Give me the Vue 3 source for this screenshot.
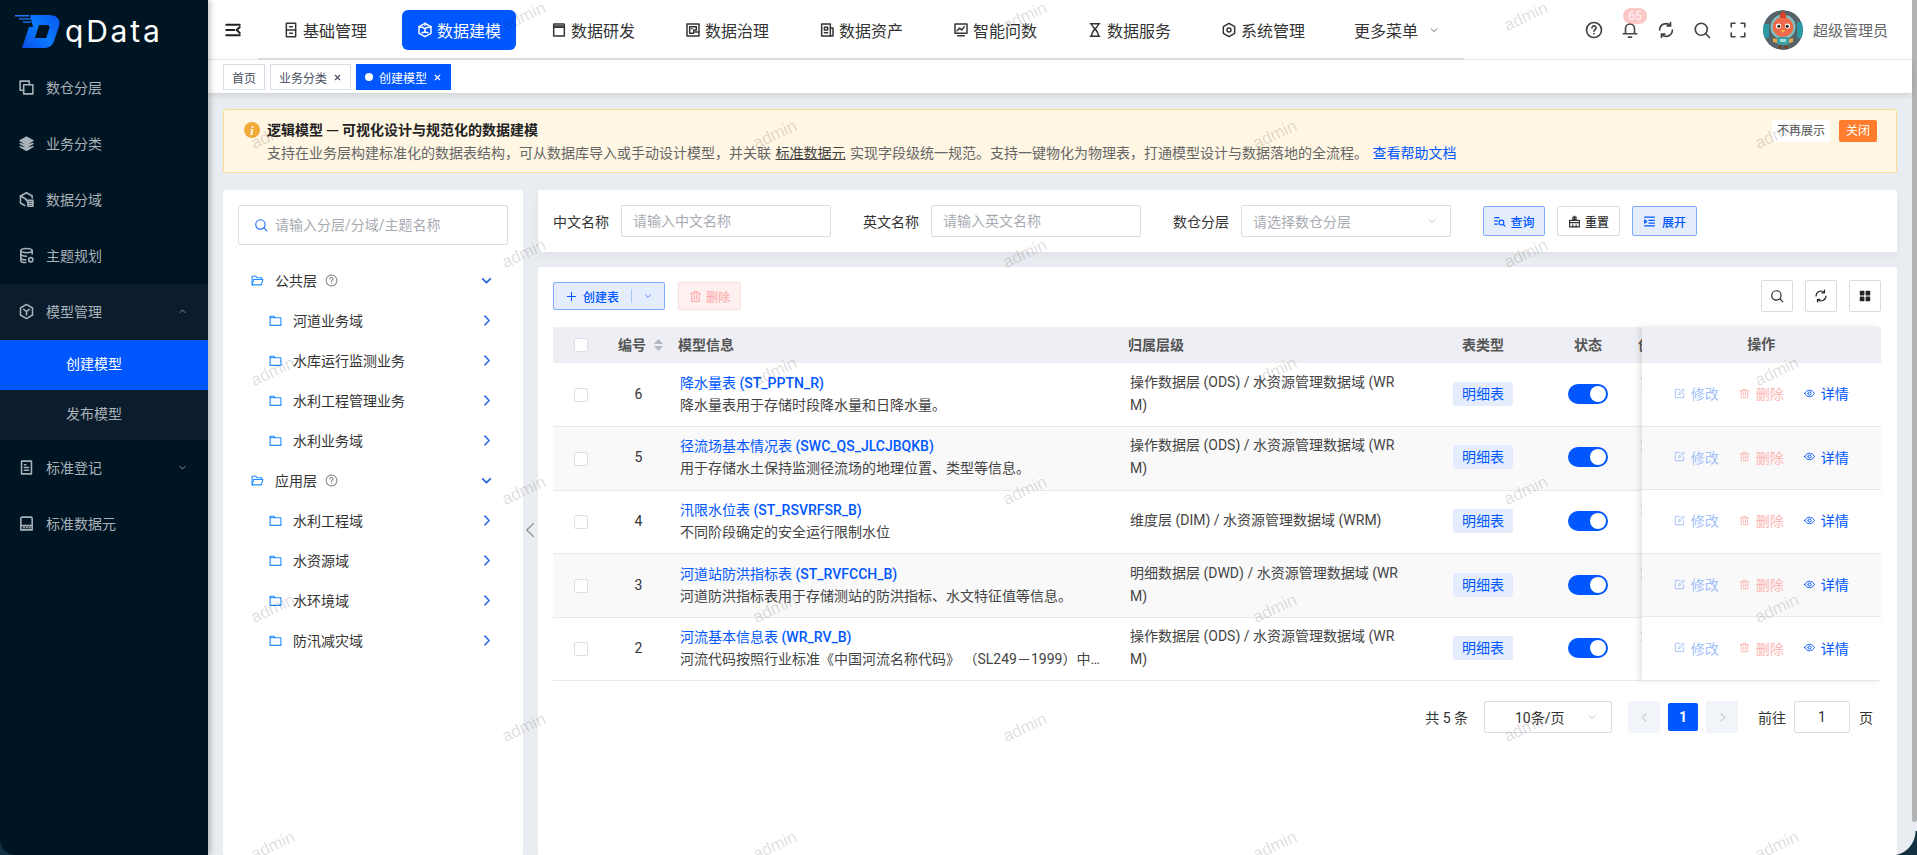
<template>
  <div class="layout">
    <aside class="sidebar">
      <div class="logo">
        <svg class="logo-mark" viewBox="0 0 45 33">
          <defs>
            <linearGradient id="logoBlue" x1="0" y1="1" x2="1" y2="0.2">
              <stop offset="0" stop-color="#0a4fe8" />
              <stop offset="0.55" stop-color="#0a7bff" />
              <stop offset="1" stop-color="#0a5cf0" />
            </linearGradient>
          </defs>
          <path d="M0 0h14v1.4H0zM4 3.2h12v1.4H4zM8 6.4h8v1.4H8z" fill="#1f7bff" />
          <path d="M15 0H34C42 0 46 5 44 11L39 26C37.5 30.5 34 33 29 33H7L14 12H18L15 0Z" fill="url(#logoBlue)" />
          <path d="M24 10H32C34 10 35 11.5 34.3 13.5L31.2 23H19.8Z" fill="#001524" />
        </svg>
        <span class="logo-text">qData</span>
      </div>
      <nav class="side-menu">
        <template v-for="item in sideMenu" :key="item.label">
          <div class="side-item" :class="{ 'side-open': item.children }">
            <Icon :name="item.icon" class="side-icon" :class="{ solid: item.icon === 'stack' }" />
            <span>{{ item.label }}</span>
            <Icon v-if="item.arrow" :name="item.arrow" class="side-arrow" />
          </div>
          <div
            v-for="child in item.children"
            :key="child.label"
            class="side-sub"
            :class="{ active: child.active }"
          >
            {{ child.label }}
          </div>
        </template>
      </nav>
    </aside>

    <div class="main">
      <header class="topbar">
        <Icon name="fold" class="fold-icon" />
        <div class="top-menu">
          <div
            v-for="nav in topMenu"
            :key="nav.label"
            class="top-item"
            :class="{ active: nav.active }"
          >
            <Icon :name="nav.icon" class="top-icon" />
            <span>{{ nav.label }}</span>
          </div>
          <div class="top-item top-more">
            <span>更多菜单</span>
            <Icon name="down" class="more-arrow" />
          </div>
        </div>
        <div class="top-right">
          <Icon name="help" class="tool-icon" />
          <div class="bell">
            <Icon name="bell" class="tool-icon" />
            <span class="badge">65</span>
          </div>
          <Icon name="refresh" class="tool-icon" />
          <Icon name="search" class="tool-icon" />
          <Icon name="full" class="tool-icon" />
          <svg class="avatar" viewBox="0 0 40 40">
            <circle cx="20" cy="20" r="20" fill="#56646a" />
            <path d="M0 14h6v14H0zM34 12h6v16h-6z" fill="#2b9aa5" />
            <circle cx="20" cy="17" r="12.5" fill="#7ec4c6" />
            <ellipse cx="20" cy="17" rx="10.5" ry="10" fill="#ee6a4c" />
            <path d="M17 8c-1-3 1-5 3-7 2 2 4 4 3 7z" fill="#d9432c" />
            <circle cx="15.5" cy="16" r="2.6" fill="#fff" />
            <circle cx="24.5" cy="16" r="2.6" fill="#fff" />
            <circle cx="15.8" cy="16.2" r="1.5" fill="#222" />
            <circle cx="24.2" cy="16.2" r="1.5" fill="#222" />
            <path d="M17.5 20h5l-2.5 3z" fill="#f4b63f" />
            <rect x="14" y="27" width="12" height="8" rx="2" fill="#3f9da6" />
            <rect x="17" y="29" width="6" height="3" fill="#9fe0e0" />
            <path d="M10 28l4 1v4l-4-1zM30 28l-4 1v4l4-1z" fill="#e5a94b" />
            <path d="M15 35h4v4h-4zM21 35h4v4h-4z" fill="#6d4a33" />
          </svg>
          <span class="username">超级管理员</span>
        </div>
      </header>

      <div class="tags">
        <div class="tag-item">首页</div>
        <div class="tag-item">业务分类<Icon name="close" class="tag-close" /></div>
        <div class="tag-item active">
          <i class="tag-dot"></i>创建模型<Icon name="close" class="tag-close" />
        </div>
      </div>

      <div class="content">
        <div class="notice">
          <svg class="notice-icon" viewBox="0 0 16 16">
            <circle cx="8" cy="8" r="8" fill="#f0ab3c" />
            <text x="8" y="12.5" text-anchor="middle" class="notice-i">i</text>
          </svg>
          <div class="notice-body">
            <div class="notice-title">逻辑模型 — 可视化设计与规范化的数据建模</div>
            <div class="notice-text">
              支持在业务层构建标准化的数据表结构，可从数据库导入或手动设计模型，并关联 <u>标准数据元</u> 实现字段级统一规范。支持一键物化为物理表，打通模型设计与数据落地的全流程。 <a class="notice-link">查看帮助文档</a>
            </div>
          </div>
          <div class="notice-actions">
            <span class="btn-mute">不再展示</span>
            <span class="btn-close">关闭</span>
          </div>
        </div>

        <div class="workspace">
          <section class="tree-panel">
            <div class="tree-search">
              <Icon name="search" class="tree-search-icon" />
              <input placeholder="请输入分层/分域/主题名称" />
            </div>
            <div class="tree">
              <template v-for="group in tree" :key="group.label">
                <div class="tree-row">
                  <Icon name="folderOpen" class="tree-folder" />
                  <span>{{ group.label }}</span>
                  <Icon name="help" class="tree-help" />
                  <Icon name="down" class="tree-down" />
                </div>
                <div v-for="leaf in group.children" :key="leaf" class="tree-row tree-leaf">
                  <Icon name="folder" class="tree-folder" />
                  <span>{{ leaf }}</span>
                  <Icon name="right" class="tree-right" />
                </div>
              </template>
            </div>
          </section>

          <div class="splitter"><Icon name="left" class="splitter-icon" /></div>

          <div class="right-col">
            <section class="filter-panel">
              <div class="form-item">
                <label>中文名称</label>
                <input placeholder="请输入中文名称" />
              </div>
              <div class="form-item">
                <label>英文名称</label>
                <input placeholder="请输入英文名称" />
              </div>
              <div class="form-item">
                <label>数仓分层</label>
                <div class="select">
                  <span>请选择数仓分层</span>
                  <Icon name="down" class="select-arrow" />
                </div>
              </div>
              <div class="form-btns">
                <button class="btn btn-plain btn-query"><Icon name="listSearch" class="btn-icon" />查询</button>
                <button class="btn btn-reset"><Icon name="brush" class="btn-icon" />重置</button>
                <button class="btn btn-plain btn-expand"><Icon name="indent" class="btn-icon" />展开</button>
              </div>
            </section>

            <section class="table-panel">
              <div class="toolbar">
                <button class="btn btn-plain btn-create">
                  <Icon name="plus" class="btn-icon" />创建表<i class="btn-split"></i><Icon name="down" class="btn-down" />
                </button>
                <button class="btn btn-del"><Icon name="trash" class="btn-icon" />删除</button>
                <div class="toolbar-right">
                  <button class="square-btn"><Icon name="search" class="square-icon" /></button>
                  <button class="square-btn"><Icon name="refresh" class="square-icon" /></button>
                  <button class="square-btn"><Icon name="grid" class="square-icon solid" /></button>
                </div>
              </div>

              <div class="table-wrap">
                <div class="table-scroll">
                  <table class="data-table">
                    <colgroup>
                      <col style="width: 56px" />
                      <col style="width: 63px" />
                      <col style="width: 448px" />
                      <col style="width: 308px" />
                      <col style="width: 110px" />
                      <col style="width: 100px" />
                      <col style="width: 180px" />
                    </colgroup>
                    <thead>
                      <tr>
                        <th class="center"><i class="checkbox"></i></th>
                        <th class="id-head">
                          编号<svg class="sort" viewBox="0 0 9 12"><path d="M4.5 0 9 5H0zM4.5 12 0 7h9z" /></svg>
                        </th>
                        <th>模型信息</th>
                        <th class="level-head">归属层级</th>
                        <th class="center">表类型</th>
                        <th class="center">状态</th>
                        <th class="time-head">创建时间</th>
                      </tr>
                    </thead>
                    <tbody>
                      <tr v-for="row in rows" :key="row.id">
                        <td class="center"><i class="checkbox"></i></td>
                        <td class="id-cell">{{ row.id }}</td>
                        <td class="info-cell">
                          <div class="model-name">{{ row.name }} <span class="model-code">({{ row.code }})</span></div>
                          <div class="model-desc">{{ row.desc }}</div>
                        </td>
                        <td class="level-cell"><div>{{ row.level }}</div></td>
                        <td class="center"><span class="type-tag">明细表</span></td>
                        <td class="center"><span class="switch"></span></td>
                        <td class="time-cell">2025-08-26<br />10:21:33</td>
                      </tr>
                    </tbody>
                  </table>
                </div>
                <div class="table-fixed">
                  <div class="fixed-head">操作</div>
                  <div v-for="row in rows" :key="row.id" class="fixed-row">
                    <span class="action edit"><Icon name="edit" class="action-icon" />修改</span>
                    <span class="action del"><Icon name="trash" class="action-icon" />删除</span>
                    <span class="action view"><Icon name="eye" class="action-icon" />详情</span>
                  </div>
                </div>
              </div>

              <div class="pager">
                <span class="pager-total">共 5 条</span>
                <div class="pager-size">
                  <span>10条/页</span>
                  <Icon name="down" class="select-arrow" />
                </div>
                <span class="pager-btn"><Icon name="left" class="pager-arrow" /></span>
                <span class="pager-num">1</span>
                <span class="pager-btn"><Icon name="right" class="pager-arrow" /></span>
                <span class="pager-goto">前往</span>
                <input class="pager-input" value="1" />
                <span class="pager-unit">页</span>
              </div>
            </section>
          </div>
        </div>
      </div>
    </div>

    <div class="scroll-track"><div class="scroll-thumb"></div></div>

    <!-- watermark and window corners lie over the page -->
    <div class="watermarks">
      <span
        v-for="mark in watermarks"
        :key="mark.x + '-' + mark.y"
        class="mark"
        :style="{ left: mark.x + 'px', top: mark.y + 'px' }"
      >admin</span>
    </div>
    <div class="corner corner-left"></div>
    <div class="corner corner-right"></div>
  </div>
</template>

<script setup>
import { h } from 'vue'

const icons = {
  fold: ['M3 5h18', 'M3 19h18', 'M3 12h11', 'M21 8l-4 4 4 4'],
  layers: ['M8 8h13v13H8z', 'M16 8V3H3v13h5'],
  stack: ['M12 3 3 8l9 5 9-5z', 'M3 12l9 5 9-5', 'M3 16.5l9 5 9-5'],
  domain: ['M12 2.5 3.5 7v10l6 3.5', 'M12 2.5 20 7v3', 'M3.5 7 12 12v2', 'M14 13h7v8.5h-7z', 'M14 16h7', 'M14 18.8h7'],
  theme: [
    'M4 5c0-1.7 3.5-3 8-3s8 1.3 8 3-3.5 3-8 3-8-1.3-8-3z',
    'M4 5v14c0 1.7 3 3 7 3',
    'M20 5v5',
    'M4 10c0 1.7 3.5 3 8 3',
    'M4 15c0 1.7 3 3 7 3',
    'M15 18a3 3 0 1 0 6 0 3 3 0 1 0-6 0'
  ],
  model: ['M12 2 20.5 7v10L12 22 3.5 17V7z', 'M8 9l4 3 4-3', 'M12 12v5'],
  doc: ['M5 3h14v18H5z', 'M9 8h2', 'M9 12h6', 'M9 16h6'],
  standard: ['M6 3h12a2 2 0 0 1 2 2v16H4V5a2 2 0 0 1 2-2z', 'M4 15h16', 'M8 18h1', 'M12 18h1', 'M16 18h1'],
  base: ['M5 2h14v20H5z', 'M5 12h14', 'M10 7h4', 'M10 17h4'],
  cube: ['M12 2 21 7v10l-9 5-9-5V7z', 'M7.5 7.5 12 10l4.5-2.5', 'M12 10v5', 'M7.5 16l4.5-1 4.5 1', 'M12 2v3', 'M3 7l3 1.5', 'M21 7l-3 1.5'],
  dev: ['M5 3h14a1 1 0 0 1 1 1v17H4V4a1 1 0 0 1 1-1z', 'M4 6h16', 'M4 8h16'],
  govern: ['M3 3h18v18H3z', 'M7 7h10v5h-4v5H7z', 'M15 15h6', 'M10 10h.5'],
  asset: ['M4 3h13v18H4z', 'M17 9h4v12h-4', 'M8 8h5v4H8z', 'M8 16h5'],
  monitor: ['M3 3h18v14H3z', 'M6 13l4-4 3 3 4-5', 'M7 20.5h10'],
  service: ['M5 2.5h14', 'M5 21.5h14', 'M7 3c0 6 10 8 10 18', 'M17 3c0 6-10 8-10 18'],
  system: ['M12 2 20.5 7v10L12 22 3.5 17V7z', 'M9 12a3 3 0 1 0 6 0 3 3 0 1 0-6 0'],
  down: ['M5 9l7 7 7-7'],
  up: ['M5 15l7-7 7 7'],
  left: ['M15 4l-8 8 8 8'],
  right: ['M9 4l8 8-8 8'],
  help: ['M2 12a10 10 0 1 0 20 0 10 10 0 1 0-20 0', 'M9.3 9.2a2.7 2.7 0 1 1 4 2.4c-.8.5-1.3 1-1.3 2', 'M12 16.8v.4'],
  bell: ['M18 16V10a6 6 0 0 0-12 0v6', 'M3 17h18', 'M10 21.5h4'],
  refresh: ['M20.5 12a8.5 8.5 0 0 1-14.5 6', 'M3.5 12A8.5 8.5 0 0 1 18 6', 'M18 2v4.5h-4.5', 'M6 22v-4.5h4.5'],
  search: ['M3 11a8 8 0 1 0 16 0 8 8 0 1 0-16 0', 'M17 17l5 5'],
  full: ['M3 8V3h5', 'M16 3h5v5', 'M21 16v5h-5', 'M8 21H3v-5'],
  close: ['M6 6l12 12', 'M18 6 6 18'],
  folder: ['M2 4h7l2 3h11v14H2z', 'M2 7h9'],
  folderOpen: ['M2 20V4h7l2 3h9v3', 'M2 20l3-10h17l-3 10z'],
  listSearch: ['M3 5h8', 'M3 11h5', 'M3 17h5', 'M11 14a4.5 4.5 0 1 0 9 0 4.5 4.5 0 1 0-9 0', 'M19 17.5l3 3'],
  brush: ['M12 2v6', 'M9 4h6v4H9z', 'M3 10h18v12H3z', 'M3 14h18', 'M9 18v4', 'M15 18v4'],
  indent: ['M3 4h18', 'M3 20h18', 'M11 10h10', 'M11 15h10', 'M3 9l4 3-4 3z'],
  plus: ['M12 3v18', 'M3 12h18'],
  trash: ['M3 6h18', 'M9 6V3h6v3', 'M5 6v15h14V6', 'M10 10v7', 'M14 10v7'],
  edit: ['M12 3H3v18h18v-9', 'M10 14l1-4 9-8 3 3-9 8z'],
  eye: ['M1.5 12C4 7 8 5 12 5s8 2 10.5 7C20 17 16 19 12 19s-8-2-10.5-7z', 'M8.5 12a3.5 3.5 0 1 0 7 0 3.5 3.5 0 1 0-7 0'],
  grid: ['M4 4h6v6H4z', 'M14 4h6v6h-6z', 'M4 14h6v6H4z', 'M14 14h6v6h-6z']
}

// small stroke icon, path data comes from the map above
const Icon = (props) =>
  h(
    'svg',
    {
      viewBox: '0 0 24 24',
      fill: 'none',
      stroke: 'currentColor',
      'stroke-width': 2,
      'stroke-linecap': 'round',
      'stroke-linejoin': 'round'
    },
    icons[props.name].map((d) => h('path', { d }))
  )
Icon.props = ['name']

const sideMenu = [
  { label: '数仓分层', icon: 'layers' },
  { label: '业务分类', icon: 'stack' },
  { label: '数据分域', icon: 'domain' },
  { label: '主题规划', icon: 'theme' },
  {
    label: '模型管理',
    icon: 'model',
    arrow: 'up',
    children: [{ label: '创建模型', active: true }, { label: '发布模型' }]
  },
  { label: '标准登记', icon: 'doc', arrow: 'down' },
  { label: '标准数据元', icon: 'standard' }
]

const topMenu = [
  { label: '基础管理', icon: 'base' },
  { label: '数据建模', icon: 'cube', active: true },
  { label: '数据研发', icon: 'dev' },
  { label: '数据治理', icon: 'govern' },
  { label: '数据资产', icon: 'asset' },
  { label: '智能问数', icon: 'monitor' },
  { label: '数据服务', icon: 'service' },
  { label: '系统管理', icon: 'system' }
]

const tree = [
  { label: '公共层', children: ['河道业务域', '水库运行监测业务', '水利工程管理业务', '水利业务域'] },
  { label: '应用层', children: ['水利工程域', '水资源域', '水环境域', '防汛减灾域'] }
]

const rows = [
  {
    id: 6,
    name: '降水量表',
    code: 'ST_PPTN_R',
    desc: '降水量表用于存储时段降水量和日降水量。',
    level: '操作数据层 (ODS) / 水资源管理数据域 (WRM)'
  },
  {
    id: 5,
    name: '径流场基本情况表',
    code: 'SWC_QS_JLCJBQKB',
    desc: '用于存储水土保持监测径流场的地理位置、类型等信息。',
    level: '操作数据层 (ODS) / 水资源管理数据域 (WRM)'
  },
  {
    id: 4,
    name: '汛限水位表',
    code: 'ST_RSVRFSR_B',
    desc: '不同阶段确定的安全运行限制水位',
    level: '维度层 (DIM) / 水资源管理数据域 (WRM)'
  },
  {
    id: 3,
    name: '河道站防洪指标表',
    code: 'ST_RVFCCH_B',
    desc: '河道防洪指标表用于存储测站的防洪指标、水文特征值等信息。',
    level: '明细数据层 (DWD) / 水资源管理数据域 (WRM)'
  },
  {
    id: 2,
    name: '河流基本信息表',
    code: 'WR_RV_B',
    desc: '河流代码按照行业标准《中国河流名称代码》 （SL249－1999）中的规定进行编码和填写。',
    level: '操作数据层 (ODS) / 水资源管理数据域 (WRM)'
  }
]

const watermarks = []
;[273, 524, 775, 1025, 1275, 1526, 1777].forEach((x, i) => {
  const first = i % 2 === 0 ? 135 : 17
  for (let n = 0; n < 4; n++) {
    watermarks.push({ x, y: first + n * 237 })
  }
})
</script>

<style>
html,
body {
  margin: 0;
  height: 100%;
  overflow: hidden;
}
</style>

<style scoped>
.layout {
  position: relative;
  display: flex;
  width: 100%;
  height: 100vh;
  overflow: hidden;
  background: #e9edf1;
  color: #333;
  font-family: Roboto, "Noto Sans CJK SC", sans-serif;
  font-size: 14px;
}

svg {
  display: block;
  flex-shrink: 0;
}

.solid {
  fill: currentColor;
}

input {
  font-family: inherit;
  font-size: 14px;
  color: #333;
  outline: none;
  box-sizing: border-box;
}

input::placeholder {
  color: #a8abb2;
}

button {
  font-family: inherit;
  cursor: pointer;
}

/* sidebar */
.sidebar {
  flex: 0 0 208px;
  position: relative;
  z-index: 3;
  background: #001524;
  color: #a9b2b9;
  box-shadow: 2px 0 6px rgba(0, 0, 0, 0.25);
}

.logo {
  display: flex;
  align-items: center;
  height: 60px;
  padding: 0 0 0 15px;
  box-sizing: border-box;
}

.logo-mark {
  width: 45px;
  height: 33px;
  margin-top: 3px;
}

.logo-text {
  margin-left: 5px;
  margin-top: 1px;
  color: #fff;
  font-family: Inter, sans-serif;
  font-size: 30px;
  letter-spacing: 2.8px;
}

.side-item {
  display: flex;
  align-items: center;
  height: 56px;
  padding: 0 0 2px 18px;
  box-sizing: border-box;
  position: relative;
}

.side-icon {
  width: 17px;
  height: 17px;
  margin-right: 11px;
  stroke-width: 2.2;
}

.side-arrow {
  position: absolute;
  left: 178px;
  width: 9px;
  height: 9px;
}

.side-open {
  background: #0b1c2c;
}

.side-sub {
  height: 50px;
  line-height: 48px;
  padding-left: 66px;
  background: #0b1c2c;
}

.side-sub.active {
  background: #0057ff;
  color: #fff;
}

/* top bar */
.main {
  flex: 1;
  min-width: 0;
  display: flex;
  flex-direction: column;
}

.topbar {
  display: flex;
  align-items: center;
  height: 60px;
  flex-shrink: 0;
  background: #fff;
  border-bottom: 1px solid #f0f0f0;
  box-sizing: border-box;
}

.fold-icon {
  width: 18px;
  height: 18px;
  margin: 0 16px 0 16px;
  color: #222;
  stroke-width: 2.6;
}

.top-menu {
  display: flex;
  gap: 20px;
  width: 1206px;
  height: 60px;
  padding-left: 10px;
  box-sizing: border-box;
  align-items: center;
  box-shadow: inset 0 -2px 0 #dcdfe6;
}

.top-item {
  display: flex;
  align-items: center;
  gap: 4px;
  width: 114px;
  height: 40px;
  padding-left: 15px;
  box-sizing: border-box;
  border-radius: 6px;
  font-size: 16px;
  color: #333;
}

.top-item.active {
  background: #0057ff;
  color: #fff;
}

.top-icon {
  width: 16px;
  height: 16px;
  stroke-width: 2.2;
}

.top-more {
  padding-left: 14px;
  gap: 11px;
  white-space: nowrap;
}

.more-arrow {
  width: 10px;
  height: 10px;
  color: #555;
}

.top-right {
  display: flex;
  align-items: center;
  gap: 18px;
  margin-left: auto;
  padding-right: 24px;
}

.tool-icon {
  width: 18px;
  height: 18px;
  color: #444;
  stroke-width: 2.2;
}

.bell {
  position: relative;
}

.badge {
  position: absolute;
  left: 2px;
  top: -13px;
  width: 24px;
  height: 16px;
  line-height: 16px;
  border-radius: 8px;
  background: rgba(245, 108, 108, 0.38);
  color: rgba(255, 255, 255, 0.85);
  font-size: 12px;
  text-align: center;
}

.avatar {
  width: 40px;
  height: 40px;
  margin-left: -2px;
  border-radius: 50%;
}

.username {
  margin-left: -8px;
  font-size: 15px;
  color: #666;
  white-space: nowrap;
}

/* open page tags */
.tags {
  display: flex;
  gap: 5px;
  height: 33px;
  flex-shrink: 0;
  padding: 4px 0 0 15px;
  box-sizing: border-box;
  background: #fff;
  box-shadow: 0 2px 6px rgba(0, 0, 0, 0.12);
  position: relative;
}

.tag-item {
  display: flex;
  align-items: center;
  height: 26px;
  padding: 0 8px;
  box-sizing: border-box;
  border: 1px solid #d8dce5;
  font-size: 12px;
  color: #495060;
}

.tag-item.active {
  background: #0057ff;
  border-color: #0057ff;
  color: #fff;
}

.tag-dot {
  width: 8px;
  height: 8px;
  margin-right: 6px;
  border-radius: 50%;
  background: #fff;
}

.tag-close {
  width: 9px;
  height: 9px;
  margin-left: 6px;
  stroke-width: 3;
}

/* page body */
.content {
  flex: 1;
  min-height: 0;
  display: flex;
  flex-direction: column;
  padding: 16px 15px 0;
}

.notice {
  display: flex;
  height: 64px;
  flex-shrink: 0;
  padding: 9px 19px 0 20px;
  box-sizing: border-box;
  background: #fff6e3;
  border: 1px solid #fbdf8f;
  border-radius: 2px;
}

.notice-icon {
  width: 16px;
  height: 16px;
  margin: 3px 7px 0 0;
}

.notice-i {
  font-family: "Liberation Serif", serif;
  font-style: italic;
  font-weight: 700;
  font-size: 12px;
  fill: #fff;
}

.notice-title {
  height: 20px;
  line-height: 20px;
  font-family: "Noto Sans CJK SC", sans-serif;
  font-weight: 700;
  color: #222;
}

.notice-text {
  margin-top: 4px;
  line-height: 20px;
  word-spacing: 1px;
  color: #666;
  white-space: nowrap;
}

.notice-text u {
  color: #444;
}

.notice-link {
  color: #0057ff;
}

.notice-actions {
  display: flex;
  gap: 9px;
  margin-top: 1px;
  margin-left: auto;
  font-size: 12px;
}

.btn-mute,
.btn-close {
  height: 22px;
  line-height: 22px;
  text-align: center;
  border-radius: 2px;
}

.btn-mute {
  width: 58px;
  background: #fff;
  color: #555;
}

.btn-close {
  width: 38px;
  background: #ff7d2c;
  color: #fff;
}

.workspace {
  flex: 1;
  min-height: 0;
  display: flex;
  margin-top: 17px;
}

/* tree */
.tree-panel {
  flex: 0 0 300px;
  padding: 15px;
  box-sizing: border-box;
  background: #fff;
  border-radius: 2px;
}

.tree-search {
  display: flex;
  align-items: center;
  width: 270px;
  height: 40px;
  padding-left: 15px;
  box-sizing: border-box;
  border: 1px solid #d9dce5;
  border-radius: 2px;
}

.tree-search-icon {
  width: 14px;
  height: 14px;
  margin-right: 7px;
  color: #1f6fff;
}

.tree-search input {
  flex: 1;
  min-width: 0;
  border: none;
  padding: 0;
}

.tree {
  margin-top: 15px;
}

.tree-row {
  display: flex;
  align-items: center;
  height: 40px;
  padding-left: 13px;
}

.tree-leaf {
  padding-left: 31px;
}

.tree-folder {
  width: 13px;
  height: 13px;
  margin-right: 11px;
  color: #1f8bff;
}

.tree-help {
  width: 13px;
  height: 13px;
  margin-left: 8px;
  color: #888;
}

.tree-down {
  width: 13px;
  height: 13px;
  margin-left: auto;
  margin-right: 15px;
  color: #1f5fe0;
  stroke-width: 3;
}

.tree-right {
  width: 13px;
  height: 13px;
  margin-left: auto;
  margin-right: 15px;
  color: #2f6ff0;
  stroke-width: 3;
}

.splitter {
  flex: 0 0 15px;
  min-width: 0;
  display: flex;
  align-items: center;
  justify-content: center;
  padding-top: 14px;
  box-sizing: border-box;
}

.splitter-icon {
  width: 20px;
  height: 20px;
  color: #888;
  stroke-width: 1.4;
}

/* filter form */
.right-col {
  flex: 1;
  min-width: 0;
  display: flex;
  flex-direction: column;
  gap: 15px;
}

.filter-panel {
  display: flex;
  align-items: center;
  height: 62px;
  flex-shrink: 0;
  padding: 0 15px;
  box-sizing: border-box;
  background: #fff;
  border-radius: 2px;
  box-shadow: 0 4px 8px rgba(0, 0, 0, 0.04);
}

.form-item {
  display: flex;
  align-items: center;
  gap: 13px;
  margin-right: 32px;
}

.form-item label {
  width: 55px;
  white-space: nowrap;
}

.form-item input,
.select {
  width: 210px;
  height: 32px;
  padding: 0 11px;
  box-sizing: border-box;
  border: 1px solid #d9dce5;
  border-radius: 2px;
}

.select {
  display: flex;
  align-items: center;
  justify-content: space-between;
  color: #a8abb2;
}

.select-arrow {
  width: 10px;
  height: 10px;
  margin-right: 2px;
  color: #b0b3ba;
}

.form-btns {
  display: flex;
  gap: 12px;
}

.btn {
  display: flex;
  align-items: center;
  justify-content: center;
  height: 30px;
  padding: 0;
  box-sizing: border-box;
  border: 1px solid #d9dce5;
  border-radius: 2px;
  background: #fff;
  font-size: 12px;
  font-weight: 500;
  color: #333;
}

.btn-plain {
  background: #e5edfd;
  border-color: #7fa8ff;
  color: #0057ff;
}

.btn-query {
  width: 62px;
}

.btn-reset {
  width: 63px;
}

.btn-expand {
  width: 65px;
}

.btn-icon {
  width: 13px;
  height: 13px;
  margin-right: 4px;
  stroke-width: 2.2;
}

.btn-expand .btn-icon {
  margin-right: 6px;
}

/* table card */
.table-panel {
  flex: 1;
  min-height: 0;
  padding: 13px 16px 0 15px;
  box-sizing: border-box;
  background: #fff;
  border-radius: 2px;
}

.toolbar {
  display: flex;
  align-items: center;
  gap: 13px;
  height: 32px;
}

.btn-create {
  width: 112px;
  height: 28px;
}

.btn-create .btn-icon {
  width: 11px;
  height: 11px;
  margin-right: 6px;
}

.btn-split {
  width: 1px;
  height: 14px;
  margin: 0 12px;
  background: #a9c3f8;
}

.btn-down {
  width: 8px;
  height: 8px;
}

.btn-del {
  width: 63px;
  height: 28px;
  background: #fff0f0;
  border-color: #fddede;
  color: #fbb0b0;
}

.toolbar-right {
  display: flex;
  gap: 12px;
  margin-left: auto;
}

.square-btn {
  display: flex;
  align-items: center;
  justify-content: center;
  width: 32px;
  height: 32px;
  padding: 0;
  background: #fff;
  border: 1px solid #d9dce5;
  border-radius: 2px;
  color: #222;
}

.square-icon {
  width: 14px;
  height: 14px;
}

.table-wrap {
  display: flex;
  margin-top: 15px;
}

.table-scroll {
  flex: 1;
  min-width: 0;
  overflow: hidden;
}

.data-table {
  width: 1265px;
  table-layout: fixed;
  border-collapse: collapse;
}

.data-table th,
.fixed-head {
  height: 36px;
  padding: 0 0 2px 6px;
  box-sizing: border-box;
  background: #eeeff4;
  font-weight: 700;
  color: #555;
  text-align: left;
  white-space: nowrap;
}

.data-table th.center,
.data-table td.center {
  padding: 0 0 2px;
  text-align: center;
}

.data-table th.id-head {
  padding-left: 9px;
}

.data-table th.level-head {
  padding-left: 8px;
}

.data-table th.time-head {
  padding-left: 0;
}

.sort {
  display: inline-block;
  width: 9px;
  height: 12px;
  margin-left: 8px;
  vertical-align: -1px;
  fill: #b3b6be;
}

.data-table td {
  height: 63.6px;
  padding: 0 0 2px;
  box-sizing: border-box;
  border-bottom: 1px solid #e6e8f0;
}

.data-table tbody tr:nth-child(even),
.fixed-row:nth-child(odd) {
  background: #f9f9fa;
}

.checkbox {
  display: inline-block;
  width: 14px;
  height: 14px;
  box-sizing: border-box;
  vertical-align: middle;
  background: #fff;
  border: 1px solid #dcdfe6;
  border-radius: 2px;
}

.data-table td.id-cell {
  padding-left: 3px;
  padding-right: 7px;
  text-align: center;
}

.data-table td.info-cell {
  padding: 0 19px 2px 8px;
}

.model-name {
  line-height: 22px;
  color: #0057ff;
  white-space: nowrap;
}

.model-code {
  font-weight: 500;
}

.model-desc {
  line-height: 22px;
  color: #444;
  white-space: nowrap;
  overflow: hidden;
  text-overflow: ellipsis;
}

.data-table td.level-cell {
  padding: 0 26px 2px 10px;
  line-height: 23px;
  color: #444;
  word-break: break-all;
}

.type-tag {
  display: inline-block;
  width: 60px;
  height: 24px;
  line-height: 24px;
  background: #e5edfd;
  border-radius: 2px;
  color: #0057ff;
}

.switch {
  display: inline-block;
  position: relative;
  width: 40px;
  height: 20px;
  vertical-align: middle;
  background: #0057ff;
  border-radius: 10px;
}

.switch::after {
  content: "";
  position: absolute;
  right: 2px;
  top: 2px;
  width: 16px;
  height: 16px;
  border-radius: 50%;
  background: #fff;
}

.data-table td.time-cell {
  padding-left: 3px;
  line-height: 23px;
  color: #444;
  white-space: nowrap;
}

.table-fixed {
  flex: 0 0 239.5px;
  position: relative;
  background: #fff;
  box-shadow: -3px 0 5px rgba(0, 0, 0, 0.1);
}

.fixed-head {
  padding: 0;
  line-height: 34px;
  text-align: center;
}

.fixed-row {
  display: flex;
  align-items: center;
  justify-content: center;
  gap: 20px;
  height: 63.6px;
  padding-bottom: 2px;
  box-sizing: border-box;
  border-bottom: 1px solid #e6e8f0;
}

.action {
  display: flex;
  align-items: center;
  gap: 6px;
}

.action-icon {
  width: 11px;
  height: 11px;
}

.action.edit {
  color: #a3bffa;
}

.action.del {
  color: #fdb4b4;
}

.action.view {
  color: #0057ff;
}

/* pagination */
.pager {
  display: flex;
  align-items: center;
  justify-content: flex-end;
  height: 32px;
  margin-top: 20px;
  padding-right: 8px;
}

.pager-total {
  margin-right: 16px;
}

.pager-size {
  display: flex;
  align-items: center;
  justify-content: space-between;
  width: 128px;
  height: 32px;
  padding: 0 12px 0 30px;
  box-sizing: border-box;
  border: 1px solid #d9dce5;
  border-radius: 2px;
  margin-right: 16px;
}

.pager-btn {
  display: flex;
  align-items: center;
  justify-content: center;
  width: 32px;
  height: 32px;
  background: #f1f4f8;
  border-radius: 2px;
  color: #a8abb2;
}

.pager-arrow {
  width: 11px;
  height: 11px;
}

.pager-num {
  width: 30px;
  height: 28px;
  line-height: 28px;
  margin: 0 8px;
  background: #0057ff;
  border-radius: 2px;
  color: #fff;
  font-weight: 700;
  text-align: center;
}

.pager-goto {
  margin-left: 20px;
  margin-right: 8px;
}

.pager-input {
  width: 56px;
  height: 32px;
  padding: 0;
  border: 1px solid #d9dce5;
  border-radius: 2px;
  text-align: center;
}

.pager-unit {
  margin-left: 9px;
}

/* scrollbar of the page */
.scroll-track {
  flex: 0 0 5px;
  background: #e9edf1;
}

.scroll-thumb {
  height: 822px;
  background: #b3b4b6;
  border-radius: 0 0 3px 3px;
}

.watermarks {
  position: absolute;
  inset: 0;
  z-index: 5;
  overflow: hidden;
  pointer-events: none;
}

.mark {
  position: absolute;
  transform: translate(-50%, -50%) rotate(-25deg);
  font-family: "Liberation Sans", sans-serif;
  font-size: 17px;
  color: rgba(0, 0, 0, 0.14);
}

.corner {
  position: absolute;
  bottom: 0;
  z-index: 6;
  pointer-events: none;
}

.corner-left {
  left: 0;
  width: 14px;
  height: 14px;
  background: radial-gradient(circle at 100% 0, transparent 13px, #12303f 14px);
}

.corner-right {
  right: 0;
  width: 26px;
  height: 24px;
  background: radial-gradient(circle at 0 0, transparent 24px, #12303f 25px);
}
</style>
